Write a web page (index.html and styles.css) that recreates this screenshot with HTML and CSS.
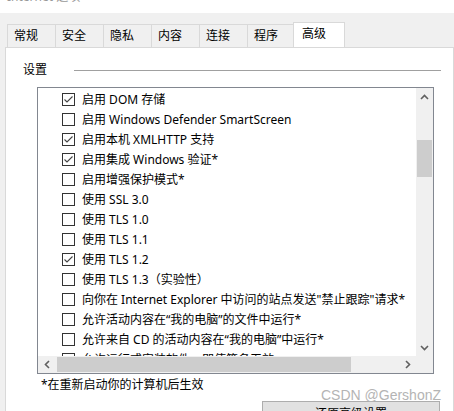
FILE: index.html
```html
<html>
    <head>
        <title>Internet 选项</title>
    <link rel="stylesheet" href="styles.css">
    </head>
    <body>
        <div class="titlebar"><span class="title">Internet 选项</span></div>
        <div class="tabs">
            <div class="tab">常规</div>
            <div class="tab">安全</div>
            <div class="tab">隐私</div>
            <div class="tab">内容</div>
            <div class="tab">连接</div>
            <div class="tab">程序</div>
            <div class="tab selected">高级</div>
        </div>
        <div class="panel">
            <div class="group">
                <span class="groupLabel">设置</span>
                <span class="groupLine"></span>
            </div>
            <div class="listbox">
                <div class="listContent">
                    <div class="row"><span class="box checked"><svg width="11" height="11" viewBox="0 0 11 11"><path d="M1.5 5.5 L4 8 L9.5 2.5" fill="none" stroke="#444" stroke-width="1.1"/></svg></span>启用 DOM 存储</div>
                    <div class="row"><span class="box"></span>启用 Windows Defender SmartScreen</div>
                    <div class="row"><span class="box checked"><svg width="11" height="11" viewBox="0 0 11 11"><path d="M1.5 5.5 L4 8 L9.5 2.5" fill="none" stroke="#444" stroke-width="1.1"/></svg></span>启用本机 XMLHTTP 支持</div>
                    <div class="row"><span class="box checked"><svg width="11" height="11" viewBox="0 0 11 11"><path d="M1.5 5.5 L4 8 L9.5 2.5" fill="none" stroke="#444" stroke-width="1.1"/></svg></span>启用集成 Windows 验证*</div>
                    <div class="row"><span class="box"></span>启用增强保护模式*</div>
                    <div class="row"><span class="box"></span>使用 SSL 3.0</div>
                    <div class="row"><span class="box"></span>使用 TLS 1.0</div>
                    <div class="row"><span class="box"></span>使用 TLS 1.1</div>
                    <div class="row"><span class="box checked"><svg width="11" height="11" viewBox="0 0 11 11"><path d="M1.5 5.5 L4 8 L9.5 2.5" fill="none" stroke="#444" stroke-width="1.1"/></svg></span>使用 TLS 1.2</div>
                    <div class="row"><span class="box"></span>使用 TLS 1.3（实验性）</div>
                    <div class="row"><span class="box"></span>向你在 Internet Explorer 中访问的站点发送"禁止跟踪"请求*</div>
                    <div class="row"><span class="box"></span>允许活动内容在“我的电脑”的文件中运行*</div>
                    <div class="row"><span class="box"></span>允许来自 CD 的活动内容在“我的电脑”中运行*</div>
                    <div class="row"><span class="box"></span>允许运行或安装软件，即使签名无效</div>
                </div>
                <div class="vscroll">
                    <div class="arrow"><svg width="9" height="6" viewBox="0 0 9 6"><path d="M1 5 L4.5 1.5 L8 5" fill="none" stroke="#606060" stroke-width="1.6"/></svg></div>
                    <div class="vtrack"><div class="vthumb"></div></div>
                    <div class="arrow"><svg width="9" height="6" viewBox="0 0 9 6"><path d="M1 1 L4.5 4.5 L8 1" fill="none" stroke="#606060" stroke-width="1.6"/></svg></div>
                </div>
                <div class="hscroll">
                    <div class="arrow"><svg width="6" height="9" viewBox="0 0 6 9"><path d="M5 1 L1.5 4.5 L5 8" fill="none" stroke="#606060" stroke-width="1.6"/></svg></div>
                    <div class="htrack"><div class="hthumb"></div></div>
                    <div class="arrow"><svg width="6" height="9" viewBox="0 0 6 9"><path d="M1 1 L4.5 4.5 L1 8" fill="none" stroke="#606060" stroke-width="1.6"/></svg></div>
                </div>
                <div class="corner"></div>
            </div>
            <div class="footnote">*在重新启动你的计算机后生效</div>
            <div class="buttons">
                <button type="button" class="winButton">还原高级设置</button>
            </div>
            <div class="watermark">CSDN @GershonZ</div>
        </div>
    </body>
</html>
```

FILE: styles.css
```css
body{
    margin: 0;
    background-color: #f0f0f0;
    font-family: "Noto Sans", "Noto Sans CJK SC", sans-serif;
    font-size: 12px;
    color: #000;
    overflow: hidden;
}
.titlebar{
    height: 13px;
    background-color: #fff;
    overflow: hidden;
    padding-left: 7px;
}
.title{
    display: block;
    line-height: 16px;
    margin-top: -11px;
    color: #999;
}
.tabs{
    display: flex;
    align-items: flex-end;
    height: 25px;
    margin-top: 9px;
    padding-left: 7px;
}
.tab{
    box-sizing: border-box;
    width: 49px;
    height: 23px;
    margin-right: -1px;
    border: 1px solid #d9d9d9;
    border-bottom: none;
    background-color: #f0f0f0;
    padding-left: 6px;
    line-height: 21px;
}
.tab.selected{
    width: 52px;
    height: 26px;
    margin-left: -2px;
    margin-bottom: -1px;
    background-color: #fff;
    padding-left: 8px;
    line-height: 22px;
    position: relative;
}
.panel{
    position: relative;
    box-sizing: border-box;
    margin-left: 5px;
    width: 449px;
    height: 400px;
    background-color: #fff;
    border: 1px solid #d9d9d9;
}
.group{
    display: flex;
    align-items: center;
    margin-top: 11px;
    margin-bottom: 2px;
    padding-left: 17px;
    height: 20px;
}
.groupLine{
    flex: 1;
    height: 1px;
    margin-left: 27px;
    margin-right: 12px;
    margin-top: 2px;
    background-color: #a0a0a0;
}
.listbox{
    box-sizing: border-box;
    margin-top: 8px;
    margin-left: 31px;
    width: 397px;
    height: 287px;
    border: 1px solid #828790;
    display: grid;
    grid-template-columns: 378px 17px;
    grid-template-rows: 268px 17px;
}
.listContent{
    overflow: hidden;
    padding-top: 1px;
}
.row{
    display: flex;
    align-items: center;
    height: 20px;
    padding-left: 24px;
    white-space: nowrap;
}
.box{
    box-sizing: border-box;
    width: 13px;
    height: 13px;
    border: 1px solid #333;
    margin-right: 7px;
    flex: none;
}
.box svg{
    display: block;
}
.vscroll{
    background-color: #f0f0f0;
    display: flex;
    flex-direction: column;
}
.hscroll{
    background-color: #f0f0f0;
    display: flex;
}
.corner{
    background-color: #f0f0f0;
}
.arrow{
    width: 17px;
    height: 17px;
    display: flex;
    align-items: center;
    justify-content: center;
    flex: none;
}
.vtrack{
    flex: 1;
    padding-top: 35px;
}
.vthumb{
    margin-left: 1px;
    width: 15px;
    height: 37px;
    background-color: #cdcdcd;
}
.htrack{
    flex: 1;
    padding-left: 2px;
}
.hthumb{
    margin-top: 1px;
    width: 294px;
    height: 15px;
    background-color: #cdcdcd;
}
.footnote{
    margin-top: 1px;
    margin-left: 35px;
    line-height: 20px;
}
.buttons{
    display: flex;
    justify-content: flex-end;
    margin-top: 6px;
    margin-right: 13px;
}
.winButton{
    width: 178px;
    height: 23px;
    border: 1px solid #adadad;
    background-color: #e1e1e1;
    font-family: "Noto Sans", "Noto Sans CJK SC", sans-serif;
    font-size: 12px;
    color: #000;
    padding: 0;
}
.watermark{
    position: absolute;
    left: 315px;
    top: 339px;
    white-space: nowrap;
    font-family: "Liberation Sans", Arial, sans-serif;
    font-size: 14px;
    line-height: 16px;
    color: #b4b4b4;
}
```
